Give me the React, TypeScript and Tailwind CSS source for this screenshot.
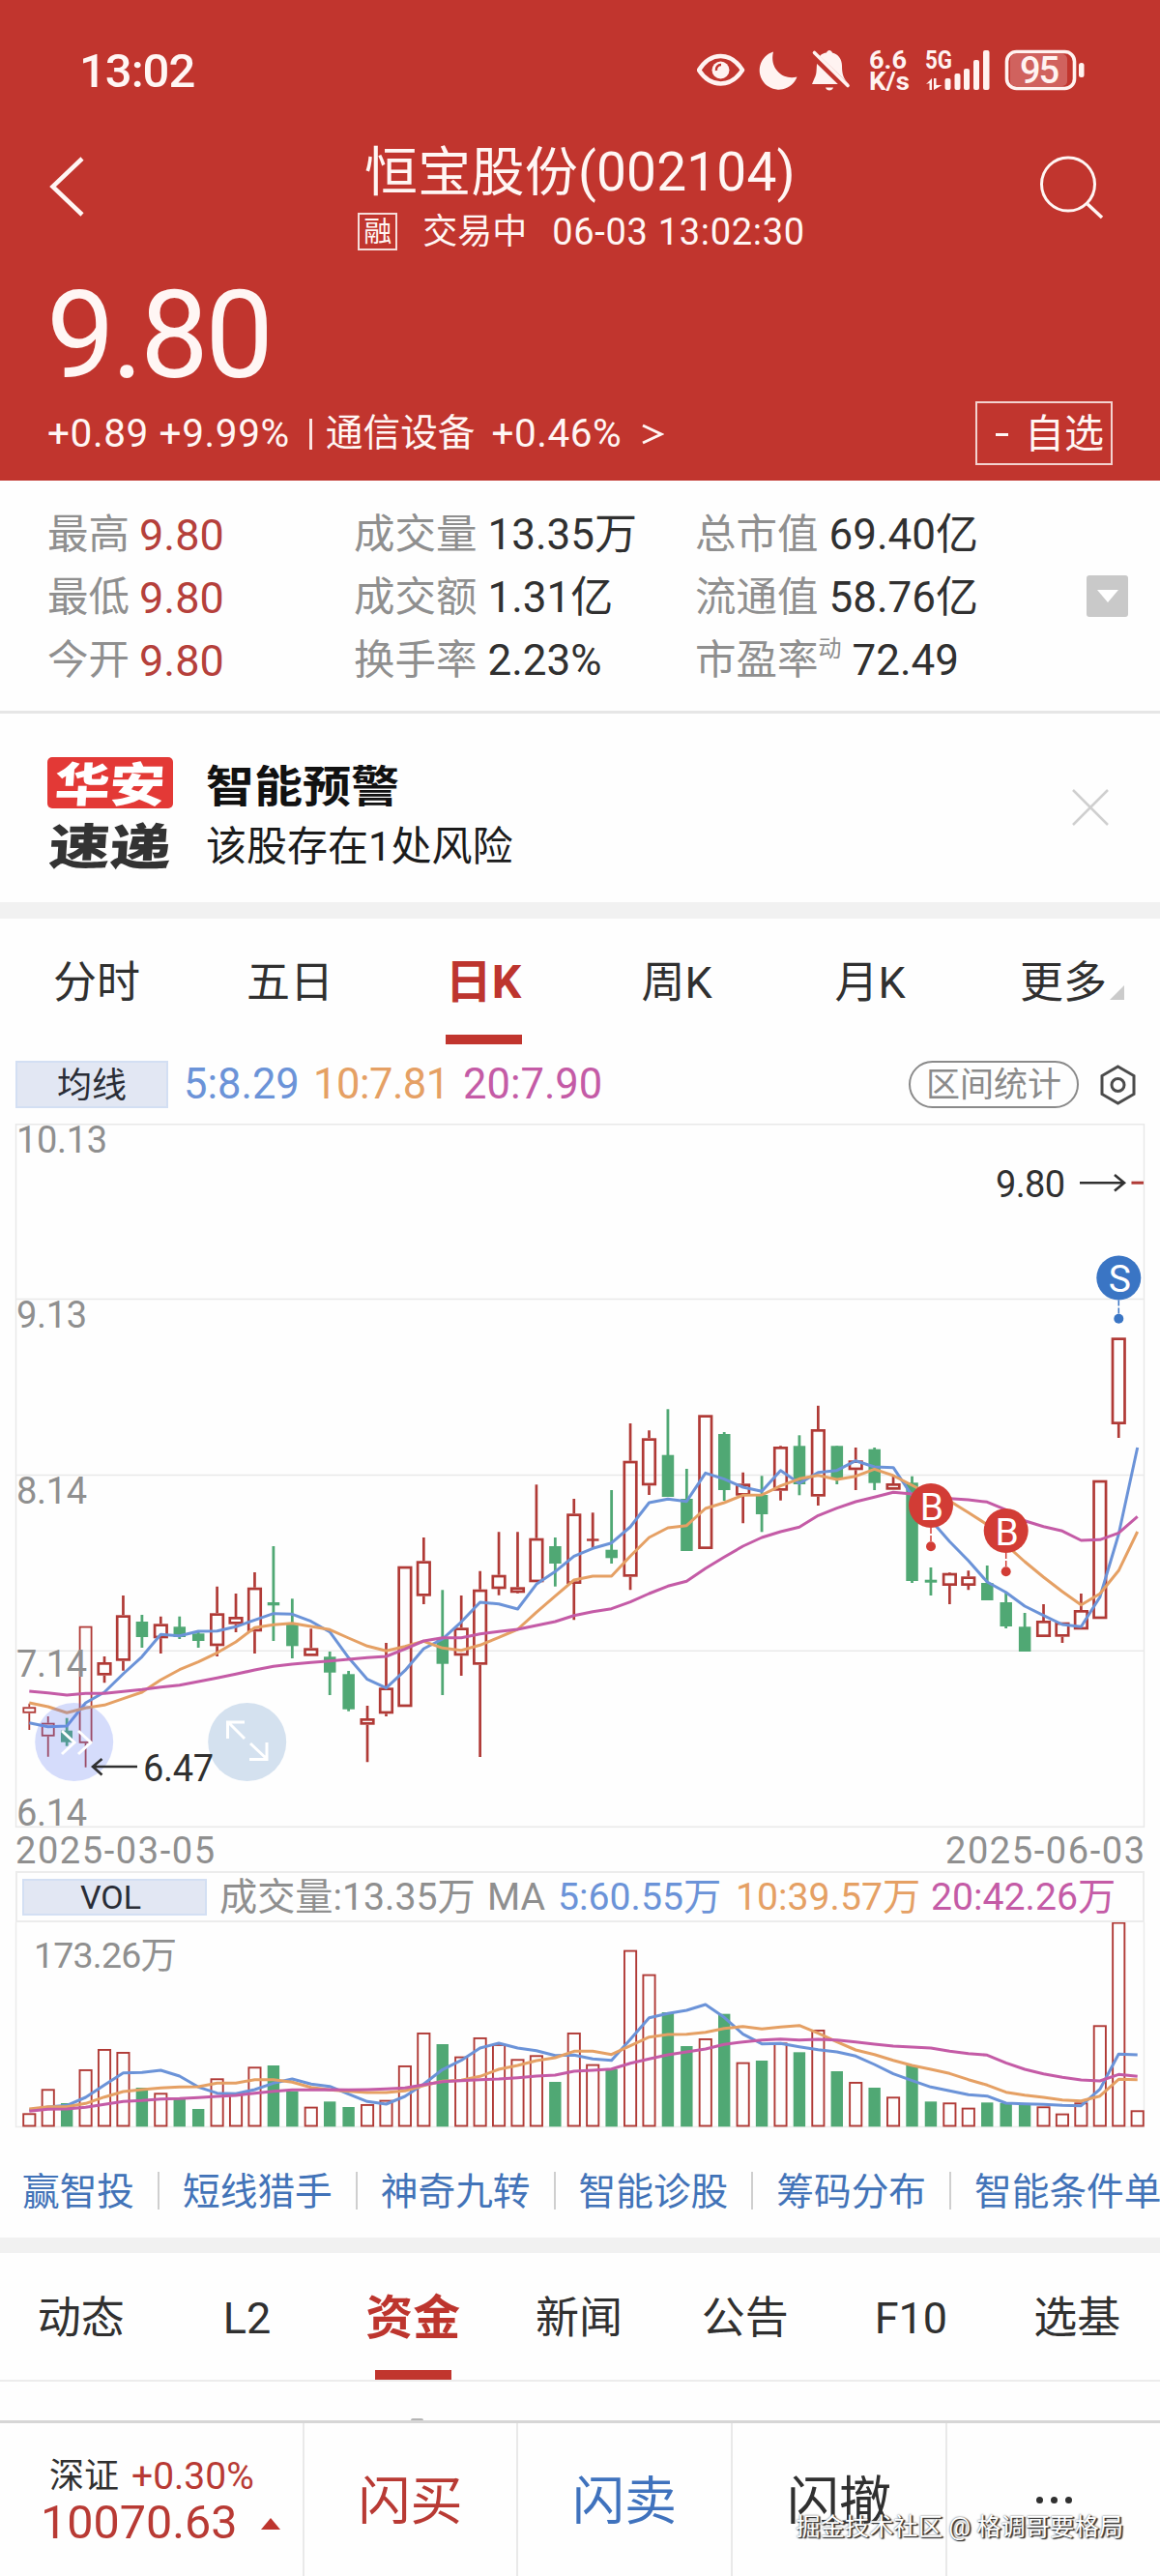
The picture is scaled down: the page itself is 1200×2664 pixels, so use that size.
import React from "react";

type Candle = {
  high: number;
  top: number;
  bottom: number;
  low: number;
  up: boolean;
};

type Stat = {
  label: string;
  value: string;
  sup?: string;
  red?: boolean;
};

const RED = "#b03a36";
const GREEN = "#50a874";
const BLUE = "#6b93d8";
const ORANGE = "#e5a064";
const PURPLE = "#c45ba6";

// one slot per trading day, 2025-03-05 .. 2025-06-03
const slotX = (i: number) => 30.3 + i * 19.43;

const c = (high: number, top: number, bottom: number, low: number, up = true): Candle => ({
  high,
  top,
  bottom,
  low,
  up,
});

const candles: Candle[] = [
  c(599.7, 603.3, 609.7, 627),
  c(613, 619.7, 633.7, 654.7),
  c(614.7, 627.7, 639.7, 643.7, false),
  c(519.7, 519.7, 640.7, 665.7),
  c(551, 557, 570.7, 578.3),
  c(488, 508.3, 555.7, 565.7),
  c(508, 515, 531, 542, false),
  c(509.7, 517.3, 532.3, 548),
  c(509.7, 520.3, 531, 533, false),
  c(524.7, 527.3, 535, 542, false),
  c(478.7, 506.3, 540.3, 551),
  c(486, 510, 517.7, 526),
  c(464, 479.7, 525.3, 548),
  c(437, 495, 498.3, 535, false),
  c(491.3, 516.7, 540.3, 553, false),
  c(522.3, 542.3, 550.7, 550.7),
  c(546, 551.3, 567.7, 591, false),
  c(566, 569.3, 605.7, 607.7, false),
  c(602, 615, 621.7, 660.3),
  c(537, 583.3, 610.3, 613),
  c(457.7, 457.7, 603.3, 603.3),
  c(428, 452.3, 488.7, 497),
  c(482.3, 533, 558.7, 591, false),
  c(488, 521.3, 550.3, 571),
  c(462.7, 481.7, 559.7, 655),
  c(422.3, 466.7, 481.3, 487.7),
  c(422.3, 479.3, 485.3, 486),
  c(373.3, 428.7, 474.3, 474.3),
  c(428, 437, 455, 478.7, false),
  c(388, 403.3, 476, 513.3),
  c(402.3, 429.3, 431.7, 439.7),
  c(379, 440.7, 449.3, 455, false),
  c(310, 348.7, 468.7, 482.3),
  c(317.3, 325.3, 374.3, 384),
  c(295.3, 342.7, 386, 386, false),
  c(357, 388, 442, 442, false),
  c(301.3, 301.3, 440, 440),
  c(319, 321, 379, 390, false),
  c(360.7, 372.3, 384.7, 413.3),
  c(364.3, 384, 404, 422.3, false),
  c(333.3, 334, 379.7, 389.7),
  c(322.3, 333.3, 373, 384.3, false),
  c(291.7, 316, 385.7, 395),
  c(333.3, 333.3, 368, 373, false),
  c(335, 348.3, 358.3, 379),
  c(335, 336.7, 371.7, 379, false),
  c(363, 372, 378.7, 378.7),
  c(364.7, 371.3, 473, 475, false),
  c(459, 471.7, 474.7, 488, false),
  c(464, 464.7, 478, 497),
  c(462.3, 468.3, 478, 482.3),
  c(457, 475, 493, 493, false),
  c(484.7, 495, 520, 522, false),
  c(506, 520.3, 546, 546, false),
  c(497, 514, 531, 531),
  c(515.7, 515.7, 530.7, 537),
  c(486, 503, 523.3, 523.3),
  c(368.7, 368.7, 512.3, 512.3),
  c(221.3, 221.3, 311, 325),
  c(61, 59.7, 62.7, 61),
];

// average lines are stored at three units per pixel
const ma5 = [
  1145, 1157, 1155, 1083, 1050, 993, 940, 871, 875, 861, 860, 847, 826, 806, 808, 830, 863, 943, 1010, 1037,
  983, 915, 885, 832, 771, 776, 792, 715, 676, 628, 604, 587, 537, 462, 451, 458, 370, 389, 414, 427,
  362, 402, 368, 362, 332, 351, 353, 440, 516, 583, 642, 708, 740, 783, 812, 840, 847, 755, 560, 291,
];
const ma10 = [
  1083, 1095, 1114, 1099, 1090, 1070, 1050, 1012, 980, 956, 928, 894, 850, 841, 836, 846, 856, 882, 907, 922,
  908, 892, 913, 920, 904, 880, 855, 802, 752, 702, 690, 690, 628, 570, 540, 533, 480, 462, 439, 438,
  410, 388, 377, 390, 380, 358, 378, 408, 438, 457, 493, 530, 593, 645, 693, 738, 779, 745, 673, 552,
];
const ma20 = [
  1047, 1052, 1059, 1054, 1054, 1048, 1042, 1034, 1028, 1017, 1006, 994, 981, 970, 963, 958, 953, 948, 943, 939,
  916, 891, 881, 881, 869, 862, 855, 843, 831, 812, 800, 791, 770, 744, 721, 706, 666, 631, 597, 570,
  552, 538, 502, 479, 459, 445, 430, 435, 445, 449, 453, 460, 484, 518, 536, 550, 579, 577, 556, 505,
];

const volumes = [
  797, 722, 765, 661, 598, 607, 717, 734, 752, 783, 689, 733, 653, 648, 728, 777, 760, 777, 769, 756,
  649, 547, 582, 621, 562, 583, 629, 617, 699, 547, 645, 660, 291, 366, 483, 588, 565, 488, 639, 633,
  578, 607, 538, 666, 700, 717, 746, 648, 760, 764, 780, 763, 765, 768, 776, 798, 764, 524, 204, 788,
];
const vol5 = [
  787, 777, 772, 747, 709, 671, 670, 663, 681, 715, 734, 736, 723, 703, 690, 706, 713, 737, 760, 768,
  744, 706, 661, 632, 594, 579, 594, 602, 617, 616, 628, 632, 567, 500, 487, 477, 459, 499, 551, 581,
  580, 590, 599, 606, 619, 645, 674, 695, 715, 727, 739, 743, 765, 767, 769, 772, 773, 722, 613, 615,
];
const vol10 = [
  783, 776, 776, 766, 746, 729, 723, 718, 715, 714, 703, 703, 692, 692, 700, 716, 724, 728, 732, 732,
  727, 710, 697, 694, 682, 660, 648, 633, 624, 604, 604, 614, 587, 560, 552, 551, 545, 533, 527, 535,
  529, 524, 548, 575, 600, 614, 632, 648, 660, 673, 692, 709, 731, 740, 747, 755, 758, 743, 691, 692,
];
const vol20 = [
  790, 784, 783, 778, 769, 760, 757, 752, 751, 748, 744, 741, 734, 728, 724, 724, 723, 724, 723, 721,
  718, 708, 698, 695, 692, 690, 686, 681, 678, 666, 663, 659, 641, 628, 615, 606, 597, 583, 575, 569,
  566, 569, 567, 569, 575, 582, 588, 591, 594, 604, 611, 616, 640, 660, 674, 685, 693, 696, 676, 682,
];

const toPoints = (values: number[], offset: number) =>
  values.map((v, i) => `${slotX(i).toFixed(1)},${(v / 3 + offset).toFixed(1)}`).join(" ");

function StatusBar() {
  return (
    <div className="flex h-[146px] items-center justify-between pl-[82px] pr-[77px]">
      <span className="text-[49px] font-medium leading-none tracking-[-1px]">13:02</span>
      <svg width="402" height="66" viewBox="722 40 402 66" fill="#fff3f1">
        <path
          d="M724 72.500C736 53 757 53 769 72.500C757 91 736 91 724 72.500Z"
          fill="none"
          stroke="#fff3f1"
          strokeWidth="4.500"
          strokeLinejoin="round"
        />
        <circle cx="746.500" cy="72.500" r="9" />
        <path d="M742 73a5 5 0 0 1 5-6" fill="none" stroke="#c1352e" strokeWidth="2.500" />
        <path d="M801 53.500a20 20 0 1 0 24.500 26c-14 4-29-8-24.500-26Z" />
        <path d="M843.500 81C846 77 845.500 72 846 67C847 58 851 55 856 54.500C857 51 861 51 862 54.500C868 56 872 61 872 68C872 75 873 79 876 83.500L879 87H841Z" />
        <path d="M855 90.500h8c-1 4-7 4-8 0Z" />
        <path d="M841 55.500L877 90.500" stroke="#c1352e" strokeWidth="8" />
        <path d="M843.500 54.500L878 88.500" stroke="#fff3f1" strokeWidth="3.600" strokeLinecap="round" />
        <g fontFamily="Roboto" fontWeight="700">
          <text x="900" y="71" fontSize="26" textLength="39" lengthAdjust="spacingAndGlyphs">6.6</text>
          <text x="900" y="92.500" fontSize="26" textLength="42" lengthAdjust="spacingAndGlyphs">K/s</text>
          <text x="958" y="71" fontSize="26" textLength="28" lengthAdjust="spacingAndGlyphs">5G</text>
        </g>
        <path d="M959 87l6-6v12h-2.500v-7zM967 81h2.500v7h6l-8.500 5z" />
        <rect x="978.500" y="81" width="6" height="12" rx="2" />
        <rect x="988.500" y="76" width="6" height="17" rx="2" />
        <rect x="998" y="71" width="6" height="22" rx="2" />
        <rect x="1008" y="62" width="6" height="31" rx="2" />
        <rect x="1018" y="52" width="6.500" height="41" rx="2" />
        <rect x="1046" y="56" width="59" height="33" rx="5" fill="#d0625e" />
        <rect x="1042.500" y="53.500" width="70" height="38" rx="10" fill="none" stroke="#fff3f1" strokeWidth="3.600" />
        <rect x="1117" y="65" width="5.500" height="15" rx="2.500" />
        <text x="1056" y="85.500" fontFamily="Roboto" fontSize="38" fontWeight="500" textLength="41">95</text>
      </svg>
    </div>
  );
}

function Header() {
  return (
    <header className="h-[497px] bg-[#c1352e] text-[#fff6f4]">
      <StatusBar />
      <div className="grid h-[124px] grid-cols-[100px_1fr_100px] items-start pl-[50px] pr-[50px]">
        <svg className="mt-[15px]" width="40" height="66" fill="none" stroke="currentColor" strokeWidth="4.500">
          <path d="M35 3L4.500 32L35 61" />
        </svg>
        <div className="flex flex-col items-center">
          <h1 className="flex h-[62px] items-center whitespace-nowrap pt-[2px] text-[55px] leading-none tracking-[0.200px]">恒宝股份(002104)</h1>
          <div className="flex h-[62px] items-center whitespace-nowrap pl-[3px] text-[38px] leading-none">
            <span className="flex h-[39px] w-[41px] items-center justify-center border-2 border-[#f6dcd9] pt-[3px] text-[29px]">融</span>
            <span className="ml-[26px] pt-[2px] text-[36px]">交易中</span>
            <span className="ml-[26px] pt-[2px] tracking-[0.700px]">06-03 13:02:30</span>
          </div>
        </div>
        <svg className="ml-[24px] mt-[13px]" width="70" height="70" fill="none" stroke="currentColor" strokeWidth="3">
          <circle cx="31" cy="31.500" r="27.500" />
          <path d="M51 52L66 66" strokeWidth="3.500" />
        </svg>
      </div>
      <div className="flex h-[145px] items-center pl-[48px] pt-[9px] text-[126px] leading-none tracking-[-3.500px]">9.80</div>
      <div className="flex h-[66px] items-center justify-between pl-[49px] pr-[49px] text-[40.500px] leading-none">
        <div className="flex items-center whitespace-nowrap pt-px">
          <span className="tracking-[0.600px]">+0.89 +9.99%</span>
          <i className="ml-[20px] h-[32px] w-[3px] bg-[#fbe4e1]" />
          <span className="ml-[14px] text-[38.700px]">通信设备</span>
          <span className="ml-[17px] tracking-[0.500px]">+0.46%</span>
          <svg className="ml-[20px]" width="24" height="22" fill="none" stroke="currentColor" strokeWidth="3">
            <path d="M2 2L21 11L2 20" />
          </svg>
        </div>
        <button className="flex h-[66px] w-[142px] items-center justify-end border-2 border-[#f3d2cf] pr-[7px] pt-[3px] text-[41px]">
          <i className="mr-[17px] h-[3.500px] w-[13px] bg-[#fff6f4]" />
          自选
        </button>
      </div>
    </header>
  );
}

const stats: Stat[][] = [
  [
    { label: "最高", value: "9.80", red: true },
    { label: "成交量", value: "13.35万" },
    { label: "总市值", value: "69.40亿" },
  ],
  [
    { label: "最低", value: "9.80", red: true },
    { label: "成交额", value: "1.31亿" },
    { label: "流通值", value: "58.76亿" },
  ],
  [
    { label: "今开", value: "9.80", red: true },
    { label: "换手率", value: "2.23%" },
    { label: "市盈率", sup: "动", value: "72.49" },
  ],
];

function StatsPanel() {
  return (
    <section className="flex h-[241px] items-center border-b-[3px] border-[#e6e6e6] pl-[49px]">
      <div className="w-[1075px] pt-[4px]">
        {stats.map((row, i) => (
          <div key={i} className="grid h-[65px] grid-cols-[317px_353px_1fr] items-center">
            {row.map((s) => (
              <div key={s.label} className="flex items-center whitespace-nowrap text-[42.500px] leading-none text-[#8f8f8f]">
                {s.label}
                {s.sup && <span className="-mt-[24px] text-[24px]">{s.sup}</span>}
                <span className={s.red ? "ml-[10px] text-[45px] text-[#b5403b]" : "ml-[11px] text-[44px] text-[#303030]"}>
                  {s.value}
                </span>
              </div>
            ))}
          </div>
        ))}
      </div>
      <div className="flex h-[43px] w-[43px] items-center justify-center rounded-[3px] bg-[#c9c9c9]">
        <svg width="24" height="16" fill="#fff">
          <path d="M1 2H23L12 15Z" />
        </svg>
      </div>
    </section>
  );
}

function Notice() {
  return (
    <section className="flex h-[195px] items-center pl-[49px] pr-[52px]">
      <div className="mt-[19px] flex w-[130px] flex-col items-center font-black">
        <div className="flex h-[53px] w-[130px] items-center justify-center rounded-[5px] bg-[#e33936] text-[57px] leading-none text-white">
          <span className="-skew-x-3 scale-y-[0.850] pt-[5px]">华安</span>
        </div>
        <div className="mt-[9px] flex h-[62px] -skew-x-3 scale-y-[0.800] items-center text-[63px] leading-none text-[#333]">速递</div>
      </div>
      <div className="ml-[34px] mt-[18px] flex-1">
        <h2 className="flex h-[62px] scale-y-[0.900] items-center pt-[2px] text-[50px] font-bold leading-none text-[#111]">智能预警</h2>
        <p className="flex h-[62px] items-center text-[42px] leading-none text-[#1b1b1b]">该股存在1处风险</p>
      </div>
      <svg className="-mt-[2px]" width="40" height="40" stroke="#cfcfcf" strokeWidth="2.500">
        <path d="M2 2L38 38M38 2L2 38" />
      </svg>
    </section>
  );
}

const periods = ["分时", "五日", "日K", "周K", "月K", "更多"];

function PeriodTabs() {
  return (
    <nav className="grid h-[131px] grid-cols-6 text-[45px] leading-none text-[#303030]">
      {periods.map((p) => (
        <div key={p} className="flex flex-col items-center">
          <span className={p === "日K" ? "flex h-[120px] items-center pt-[12px] text-[48px] font-bold text-[#bd352e]" : "flex h-[120px] items-center pt-[12px]"}>
            {p}
            {p === "更多" && (
              <svg className="-mr-[18px] ml-[3px] mt-[20px]" width="15" height="15" fill="#cbcbcb">
                <path d="M15 0V15H0Z" />
              </svg>
            )}
          </span>
          {p === "日K" && <i className="h-[10px] w-[79px] bg-[#c1352e]" />}
        </div>
      ))}
    </nav>
  );
}

function AverageLegend() {
  return (
    <div className="flex h-[81px] items-center pl-[16px] pr-[25px] leading-none">
      <div className="flex h-[49px] w-[158px] items-center justify-center border-2 border-[#d3dff3] bg-[#e2e7f3] pt-[2px] text-[36px] text-[#2a2d36]">均线</div>
      <div className="flex flex-1 whitespace-nowrap text-[43.500px]">
        <span className="ml-[16px] w-[134px] text-[#6b93d8]">5:8.29</span>
        <span className="w-[155px] tracking-[-0.500px] text-[#e5a064]">10:7.81</span>
        <span className="text-[#c45ba6]">20:7.90</span>
      </div>
      <div className="flex h-[49px] w-[176px] items-center justify-center rounded-full border-2 border-[#8a8a8a] pt-[2px] text-[35px] text-[#8a8a8a]">区间统计</div>
      <svg className="ml-[22px]" width="37" height="42" fill="none" stroke="#4b4b4b" strokeWidth="3">
        <path d="M18.500 2L35 11.500V30.500L18.500 40L2 30.500V11.500Z" />
        <circle cx="18.500" cy="21" r="6.500" />
      </svg>
    </div>
  );
}

function Marker({ x, y, label, color }: { x: number; y: number; label: string; color: string }) {
  return (
    <g fill={color}>
      <path d={`M${x} ${y + 23}V${y + 40}`} stroke={color} strokeWidth="1.500" strokeDasharray="6 2" />
      <circle cx={x} cy={y} r="23" />
      <circle cx={x} cy={y + 42.300} r="5" />
      <text x={x + 1} y={y + 14.500} fill="#fff" fontSize="39" textAnchor="middle">
        {label}
      </text>
    </g>
  );
}

function PriceChart() {
  return (
    <svg className="block overflow-visible" width="1200" height="773" fontFamily="Roboto, 'Noto Sans CJK SC', sans-serif">
      <g stroke="#e9e9e9" strokeWidth="1.500" fill="none">
        <rect x="16.500" y="0.800" width="1167" height="726.500" />
        <path d="M16 181.500H1184M16 363.600H1184M16 545.200H1184" />
      </g>
      {candles.map((k, i) => {
        const x = slotX(i);
        const thin = i < 4;
        const w = thin ? 12 : 12.5;
        const line = thin ? 1.8 : 2.7;
        if (!k.up || k.bottom - k.top < 4) {
          const color = k.up ? RED : GREEN;
          return (
            <g key={i} fill={color}>
              <rect x={x - 1.4} y={k.high} width="2.800" height={Math.max(k.low - k.high, 0)} />
              <rect x={x - 6.2} y={k.top} width={w} height={k.bottom - k.top} />
            </g>
          );
        }
        return (
          <g key={i} stroke={RED} strokeWidth={line} fill="none">
            <path d={`M${x} ${k.high}V${k.top}M${x} ${k.bottom}V${k.low}`} />
            <rect x={x - w / 2} y={k.top + line / 2} width={w} height={k.bottom - k.top - line} />
          </g>
        );
      })}
      <g fill="none" strokeWidth="3" strokeLinejoin="round">
        <polyline points={toPoints(ma5, 238)} stroke={BLUE} />
        <polyline points={toPoints(ma10, 238)} stroke={ORANGE} />
        <polyline points={toPoints(ma20, 238)} stroke={PURPLE} />
      </g>
      <g fill="#8f8f8f" fontSize="38">
        <text x="17" y="29.500" textLength="94">10.13</text>
        <text x="17" y="211" textLength="73">9.13</text>
        <text x="17" y="392.500" textLength="73">8.14</text>
        <text x="17" y="571.500" textLength="73">7.14</text>
        <text x="17" y="725.500" textLength="73">6.14</text>
        <text x="16" y="765" textLength="206">2025-03-05</text>
        <text x="978" y="765" textLength="206">2025-06-03</text>
      </g>
      <circle cx="76.700" cy="639.500" r="40.500" fill="#5f7df5" fillOpacity="0.260" />
      <circle cx="255.700" cy="639.500" r="40.500" fill="#2f70b5" fillOpacity="0.200" />
      <g fill="none" stroke="#fff" strokeWidth="3">
        <path d="M64 628L77 640L64 652M81 628L94 640L81 652" />
        <path d="M253 619H235.500V636M236 619L253 636M276 640V657.500H258M276 657L259 641" />
      </g>
      <g fill="none" stroke="#303030" strokeWidth="2.600">
        <path d="M142 665H96M105.500 657L96 665L105.500 673.500" />
        <path d="M1117 61.200H1163M1153 53L1163 61.200L1153 69.500" />
      </g>
      <g fill="#303030" fontSize="38">
        <text x="148" y="679.500" textLength="73">6.47</text>
        <text x="1030" y="75.500" textLength="72">9.80</text>
      </g>
      <Marker x={963} y={395} label="B" color="#d23c35" />
      <Marker x={1040.7} y={421} label="B" color="#d23c35" />
      <Marker x={1157.3} y={159.500} label="S" color="#3a75c4" />
    </svg>
  );
}

function VolumePanel() {
  return (
    <section>
      <div className="mx-[16px] flex h-[53px] items-center border-2 border-[#ececec] pl-[5px] leading-none">
        <div className="flex h-[38px] w-[191px] items-center justify-center border-2 border-[#d3dff3] bg-[#e2e7f3] pr-[8px] text-[34px] text-[#2a2d36]">VOL</div>
        <div className="flex whitespace-nowrap pt-[3px] text-[39.200px]">
          <span className="ml-[13px] w-[277px] text-[#8f8f8f]">成交量:13.35万</span>
          <span className="w-[73px] text-[#8f8f8f]">MA</span>
          <span className="w-[184px] text-[#6b93d8]">5:60.55万</span>
          <span className="w-[202px] text-[#e5a064]">10:39.57万</span>
          <span className="text-[#c45ba6]">20:42.26万</span>
        </div>
      </div>
      <svg className="block" width="1200" height="213" fontFamily="Roboto, 'Noto Sans CJK SC', sans-serif">
        <path d="M16.500 0V211.500H1183.500V0" fill="none" stroke="#ececec" strokeWidth="1.500" />
        <text x="35" y="47" fontSize="37.500" fill="#8f8f8f" textLength="148">173.26万</text>
        {volumes.map((v, i) => {
          const x = slotX(i);
          const y = v / 3 - 68;
          return candles[i].up ? (
            <rect key={i} x={x - 6.1} y={y + 0.6} width="12.200" height={209.900 - y} fill="none" stroke={RED} strokeWidth="1.900" />
          ) : (
            <rect key={i} x={x - 6.2} y={y} width="12.400" height={211.300 - y} fill={GREEN} />
          );
        })}
        <g fill="none" strokeWidth="3" strokeLinejoin="round">
          <polyline points={toPoints(vol5, -68)} stroke={BLUE} />
          <polyline points={toPoints(vol10, -68)} stroke={ORANGE} />
          <polyline points={toPoints(vol20, -68)} stroke={PURPLE} />
        </g>
      </svg>
    </section>
  );
}

const tools = ["赢智投", "短线猎手", "神奇九转", "智能诊股", "筹码分布", "智能条件单"];

function ToolLinks() {
  return (
    <div className="flex h-[113px] items-center overflow-hidden whitespace-nowrap pl-[23px] pt-[18px] text-[38.700px] leading-none text-[#4273b8]">
      {tools.map((t, i) => (
        <React.Fragment key={t}>
          {i > 0 && <i className="mx-[24px] -mt-[2px] h-[39px] w-[2px] shrink-0 bg-[#cfcfcf]" />}
          <span className="shrink-0 pt-px">{t}</span>
        </React.Fragment>
      ))}
    </div>
  );
}

const sections = ["动态", "L2", "资金", "新闻", "公告", "F10", "选基"];

function SectionTabs() {
  return (
    <nav className="-ml-[2px] grid h-[133px] grid-cols-7 border-b-2 border-[#ececec] text-[45px] leading-none text-[#303030]">
      {sections.map((s) => (
        <div key={s} className="flex flex-col items-center">
          <span className={s === "资金" ? "flex h-[121px] items-center pt-[13px] text-[49px] font-bold text-[#bd352e]" : "flex h-[121px] items-center pt-[13px]"}>
            {s}
          </span>
          {s === "资金" && <i className="h-[10px] w-[79px] bg-[#c1352e]" />}
        </div>
      ))}
    </nav>
  );
}

function BottomBar() {
  return (
    <footer className="relative grid h-[161px] grid-cols-[315px_221px_222px_222px_1fr] border-t-[3px] border-[#d6d6d6] leading-none">
      <div className="flex flex-col border-r-2 border-[#e9e9e9] pt-[34px] text-[#b83a34]">
        <div className="flex h-[42px] items-center whitespace-nowrap pl-[51px] text-[36px]">
          <span className="text-[#303030]">深证</span>
          <span className="ml-[13px] text-[39px]">+0.30%</span>
        </div>
        <div className="flex h-[50px] items-center pl-[42px] pt-[5px] text-[48.500px]">
          10070.63
          <svg className="ml-[24px] mt-px" width="20" height="12" fill="#bd352e">
            <path d="M10 0L20 12H0Z" />
          </svg>
        </div>
      </div>
      <div className="flex items-center justify-center border-r-2 border-[#e9e9e9] pt-[6px] text-[54px] text-[#b83a34]">闪买</div>
      <div className="flex items-center justify-center border-r-2 border-[#e9e9e9] pt-[6px] text-[54px] text-[#3f72bd]">闪卖</div>
      <div className="flex items-center justify-center border-r-2 border-[#e9e9e9] pt-[6px] text-[54px] text-[#303030]">闪撤</div>
      <div className="flex items-center justify-center gap-[8px]">
        <i className="h-[7px] w-[7px] rounded-full bg-[#303030]" />
        <i className="h-[7px] w-[7px] rounded-full bg-[#303030]" />
        <i className="h-[7px] w-[7px] rounded-full bg-[#303030]" />
      </div>
      <div className="absolute right-[38px] top-[95px] whitespace-nowrap text-[25.300px] text-white [text-shadow:1px_1px_1px_#333,0_0_2px_#555,2px_1px_1px_#444]">
        掘金技术社区 @ 格调哥要格局
      </div>
    </footer>
  );
}

export default function App() {
  return (
    <div className="h-[2664px] w-[1200px] overflow-hidden bg-[#fefefe] font-['Roboto','Noto_Sans_CJK_SC',sans-serif] not-italic">
      <Header />
      <StatsPanel />
      <Notice />
      <div className="h-[17px] bg-[#f1f1f1]" />
      <PeriodTabs />
      <AverageLegend />
      <PriceChart />
      <VolumePanel />
      <ToolLinks />
      <div className="h-[16px] bg-[#f1f1f1]" />
      <SectionTabs />
      <div className="flex h-[40px] items-end pl-[425px]">
        <i className="h-[2px] w-[13px] rounded-t-full bg-[#b5b5b5]" />
      </div>
      <BottomBar />
    </div>
  );
}
